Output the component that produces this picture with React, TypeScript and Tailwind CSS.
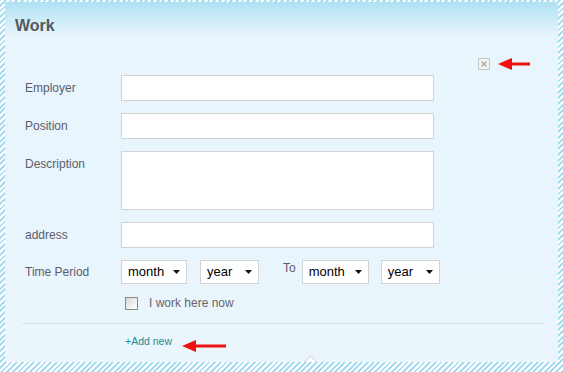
const font = { fontFamily: '"Liberation Sans", Arial, sans-serif' };

function Caret() {
  return (
    <svg width="7" height="4" viewBox="0 0 7 4" className="shrink-0">
      <path d="M0 0H7L3.5 4Z" fill="#111" />
    </svg>
  );
}

function Select({ label, width }: { label: string; width: string }) {
  return (
    <div
      className={`flex h-[24px] ${width} items-center justify-between border border-[#d3d3d3] bg-white pl-[6px] pr-[6px] text-[13px] text-black`}
    >
      <span>{label}</span>
      <Caret />
    </div>
  );
}

function RedArrow({ length }: { length: number }) {
  return (
    <svg width={length} height="14" viewBox={`0 0 ${length} 14`}>
      <path d={`M0 7L14 1V5.5H${length}V8.5H14V13Z`} fill="#ee1111" />
    </svg>
  );
}

function Row({ label, children, pad = "pt-[6px]" }: { label: string; children: React.ReactNode; pad?: string }) {
  return (
    <div className="flex">
      <div className={`w-[96px] shrink-0 ${pad} text-[12px] leading-[14px] text-[#5c5c6c]`}>{label}</div>
      {children}
    </div>
  );
}

export default function App() {
  return (
    <div
      style={font}
      className="h-[372px] w-[563px] bg-[repeating-linear-gradient(-45deg,#a8dcf1_0px,#a8dcf1_2px,#ffffff_2px,#ffffff_4px)] pb-[10px] pl-[5px] pr-[5px] pt-[2px]"
    >
      <div className="relative flex h-full flex-col bg-[linear-gradient(#afe1f3,#e8f5fc_34px,#eaf5fc)]">
        {/* title */}
        <div className="pl-[10px] pt-[15px] text-[16px] font-bold leading-[18px] text-[#55585c]">Work</div>

        {/* remove */}
        <div className="mt-[22px] flex items-center justify-end pr-[28px]">
          <div className="flex h-[12px] w-[12px] items-center justify-center border border-[#c8c8c8] bg-[#f4f4f4]">
            <svg width="6" height="6" viewBox="0 0 6 6">
              <path d="M0.5 0.5L5.5 5.5M5.5 0.5L0.5 5.5" stroke="#aaa" strokeWidth="1.4" />
            </svg>
          </div>
          <div className="ml-[8px]">
            <RedArrow length={32} />
          </div>
        </div>

        <div className="mt-[4px] flex flex-col gap-[12px] pl-[20px]">
          <Row label="Employer">
            <div className="h-[26px] w-[313px] border border-[#d3d3d3] bg-white" />
          </Row>
          <Row label="Position">
            <div className="h-[26px] w-[313px] border border-[#d3d3d3] bg-white" />
          </Row>
          <Row label="Description">
            <div className="h-[59px] w-[313px] border border-[#d3d3d3] bg-white" />
          </Row>
          <Row label="address">
            <div className="h-[26px] w-[313px] border border-[#d3d3d3] bg-white" />
          </Row>
          <Row label="Time Period" pad="pt-[5px]">
            <div className="flex items-start">
              <Select label="month" width="w-[66px]" />
              <div className="ml-[13px]">
                <Select label="year" width="w-[59px]" />
              </div>
              <div className="ml-[24px] pt-[1px] text-[12px] leading-[14px] text-[#5c5c6c]">To</div>
              <div className="ml-[6px]">
                <Select label="month" width="w-[67px]" />
              </div>
              <div className="ml-[12px]">
                <Select label="year" width="w-[59px]" />
              </div>
            </div>
          </Row>
        </div>

        {/* current job */}
        <div className="mt-[12px] flex items-center pl-[120px]">
          <div className="h-[13px] w-[13px] border border-[#8a8a8a] bg-[linear-gradient(135deg,#d8d8d8,#ffffff)]" />
          <span className="ml-[11px] text-[12px] leading-[14px] text-[#66666f]">I work here now</span>
        </div>

        <div className="ml-[17px] mr-[15px] mt-[13px] border-t border-dotted border-[#c4c9cc]" />

        <div className="mt-[11px] flex items-start pl-[120px]">
          <span className="text-[10.5px] leading-[12px] text-[#1f8c96]">+Add new</span>
          <div className="ml-[10px] mt-[4px]">
            <RedArrow length={44} />
          </div>
        </div>

        <svg width="13" height="7" viewBox="0 0 13 7" className="absolute bottom-0 left-[299px]">
          <path d="M0.5 7L6.5 1L12.5 7" fill="#fff" stroke="#c6c6c6" />
        </svg>
      </div>
    </div>
  );
}
